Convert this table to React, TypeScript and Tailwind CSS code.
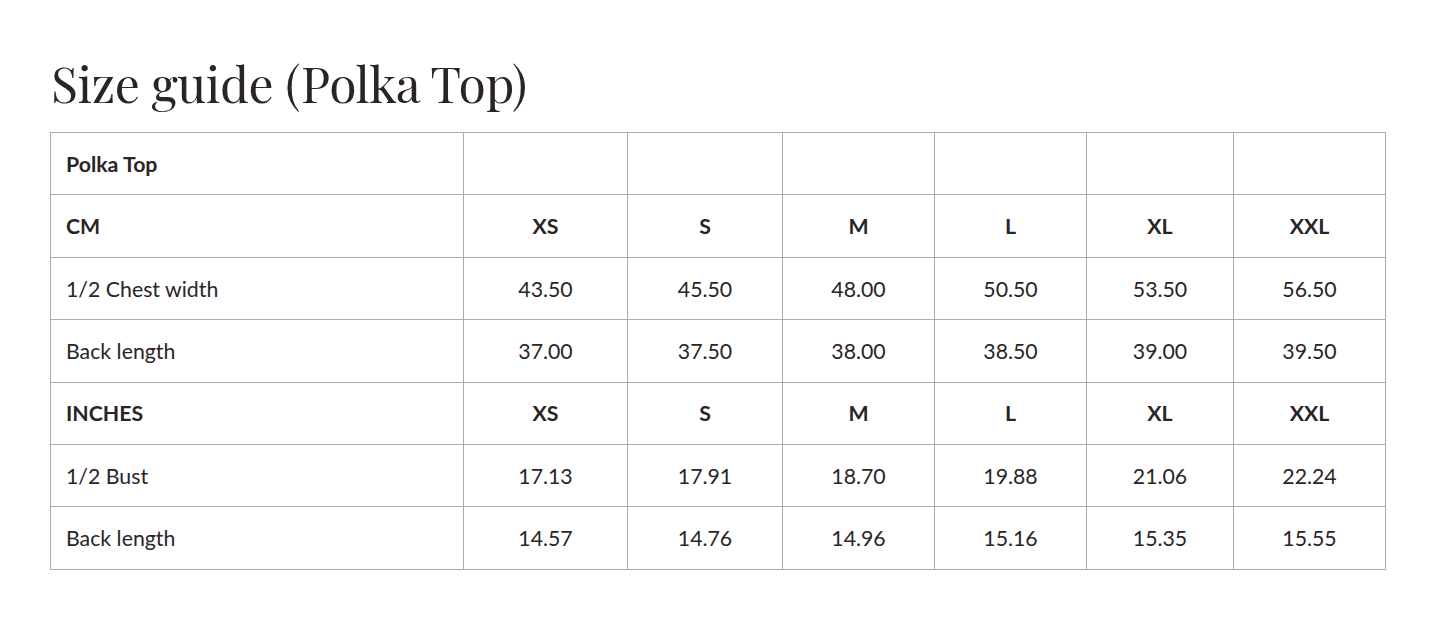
const sizes = ['XS', 'S', 'M', 'L', 'XL', 'XXL'];

interface Row {
  label: string;
  values: string[];
  header?: boolean;
}

const rows: Row[] = [
  { label: 'Polka Top', values: ['', '', '', '', '', ''], header: true },
  { label: 'CM', values: sizes, header: true },
  { label: '1/2 Chest width', values: ['43.50', '45.50', '48.00', '50.50', '53.50', '56.50'] },
  { label: 'Back length', values: ['37.00', '37.50', '38.00', '38.50', '39.00', '39.50'] },
  { label: 'INCHES', values: sizes, header: true },
  { label: '1/2 Bust', values: ['17.13', '17.91', '18.70', '19.88', '21.06', '22.24'] },
  { label: 'Back length', values: ['14.57', '14.76', '14.96', '15.16', '15.35', '15.55'] }
];

export default function App() {
  return (
    <div className="min-h-screen bg-white px-[50px] pt-[48px] text-[#2b2427]">
      <h1 className="mb-[16px] pl-[1px] font-['Playfair_Display','DejaVu_Serif','Liberation_Serif',serif] text-[49.8px] leading-[68px] font-normal tracking-[-0.45px]">
        Size guide (Polka Top)
      </h1>
      <table className="w-[1335px] table-fixed border-collapse font-['Lato',sans-serif] text-[21.3px]">
        <colgroup>
          <col className="w-[413px]" />
          <col className="w-[164px]" />
          <col className="w-[155px]" />
          <col className="w-[152px]" />
          <col className="w-[152px]" />
          <col className="w-[147px]" />
          <col className="w-[152px]" />
        </colgroup>
        <tbody>
          {rows.map((row, i) => (
            <tr key={i} className="h-[62.4px]">
              <td
                className={`border border-[#ababab] px-[15px] pt-[2px] ${row.header ? 'font-bold' : ''}`}
              >
                {row.label}
              </td>
              {row.values.map((v, j) => (
                <td
                  key={j}
                  className={`border border-[#ababab] pt-[2px] text-center ${row.header ? 'font-bold' : ''}`}
                >
                  {v}
                </td>
              ))}
            </tr>
          ))}
        </tbody>
      </table>
    </div>
  );
}
